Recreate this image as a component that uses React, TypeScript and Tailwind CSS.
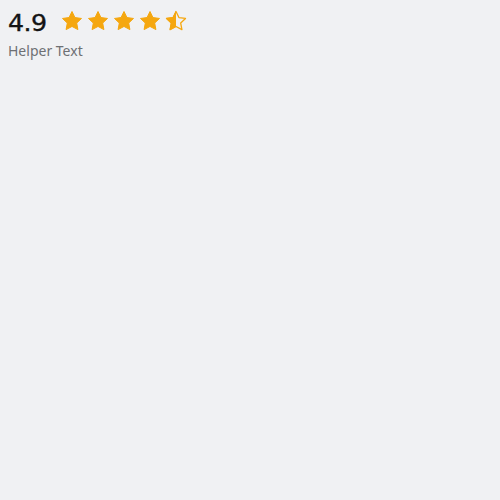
import React from "react";

const STAR =
  "M12 2.5l2.94 6.06 6.56.9-4.8 4.6 1.2 6.54L12 17.45 6.1 20.6l1.2-6.54-4.8-4.6 6.56-.9z";

function Star({ fill }: { fill: "full" | "half" }) {
  return (
    <svg width="24" height="24" viewBox="0 0 24 24">
      <defs>
        <clipPath id="half-star">
          <rect x="0" y="0" width="12" height="24" />
        </clipPath>
      </defs>
      {fill === "full" ? (
        <path d={STAR} fill="#f5a70f" stroke="#f5a70f" strokeWidth="1" strokeLinejoin="round" />
      ) : (
        <>
          <path d={STAR} fill="none" stroke="#f5a70f" strokeWidth="1.3" strokeLinejoin="round" />
          <path d={STAR} fill="#f5a70f" stroke="#f5a70f" strokeWidth="1" strokeLinejoin="round" clipPath="url(#half-star)" />
        </>
      )}
    </svg>
  );
}

export default function App() {
  return (
    <div className="min-h-screen w-full bg-[#f0f1f3] p-2">
      <div className="flex items-start gap-[17px]">
        <span className="mt-[4px] block origin-left scale-x-[1.1] text-[23px] leading-none tracking-[-0.5px] text-[#141414] [-webkit-text-stroke:0.35px_#141414] [font-family:'DejaVu_Sans',sans-serif]">
          4.9
        </span>
        <div className="mt-[1px] flex items-center gap-[2px]">
          <Star fill="full" />
          <Star fill="full" />
          <Star fill="full" />
          <Star fill="full" />
          <Star fill="half" />
        </div>
      </div>
      <p className="mt-[6px] text-sm text-[#6e7073] [font-family:'Noto_Sans',sans-serif]">Helper Text</p>
    </div>
  );
}
